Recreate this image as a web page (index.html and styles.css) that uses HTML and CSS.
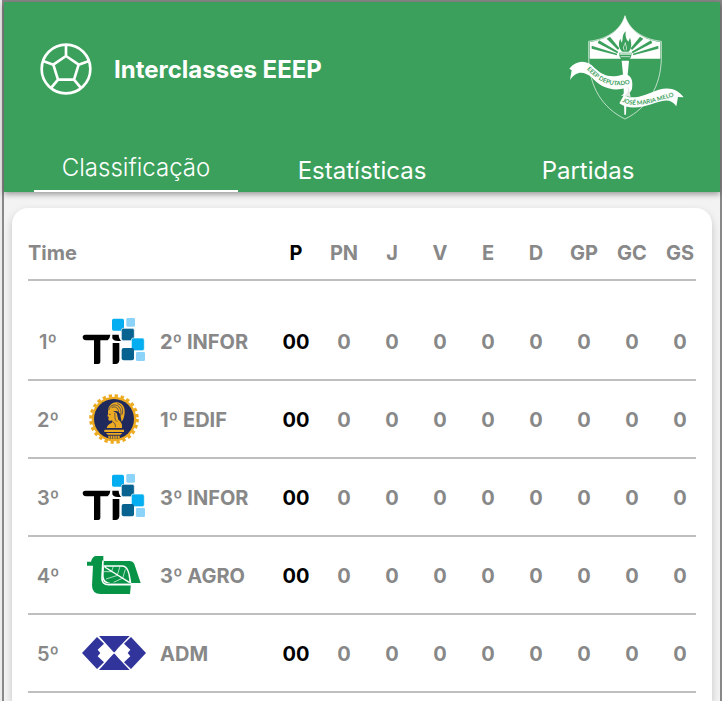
FILE: index.html
```html
<!DOCTYPE html>
<html lang="pt-BR">
<head>
<meta charset="utf-8">
<meta name="viewport" content="width=device-width, initial-scale=1">
<title>Interclasses EEEP</title>
<link rel="stylesheet" href="styles.css">
</head>
<body>
<svg class="sprite" aria-hidden="true">
  <symbol id="logo-ti" viewBox="186 45 192 156">
    <path d="M188 112q0-8 8-8h75q-1 12-8 17h-22v66q-1 5-6 5h-13v-71h-24q-9 0-10-9z" fill="#000"/>
    <path d="M277 104h19q1 14 8 18-24 3-27-7zM278 129h20v52q-1 11-11 11h-9z" fill="#000"/>
    <rect x="276" y="56" width="36" height="36" rx="5" fill="#05aef0"/>
    <rect x="319" y="54" width="26" height="26" rx="4" fill="#8bd3f8"/>
    <rect x="304" y="85" width="39" height="37" rx="6" fill="#07628f" stroke="#fff" stroke-width="2"/>
    <rect x="334" y="114" width="39" height="38" rx="6" fill="#05aef0" stroke="#fff" stroke-width="2"/>
    <rect x="305" y="144" width="37" height="37" rx="6" fill="#07628f"/>
    <rect x="348" y="156" width="27" height="27" rx="4" fill="#8bd3f8"/>
  </symbol>
  <symbol id="logo-edif" viewBox="186 39 192 156">
    <circle cx="282" cy="117" r="67" fill="#edab22"/>
    <circle cx="282" cy="117" r="70" fill="none" stroke="#edab22" stroke-width="9" stroke-dasharray="10 8.325"/>
    <circle cx="282" cy="117" r="60" fill="#20295b"/>
    <path d="M264 95c0-17 12-29 26-28 17 1 25 14 24 31-1 12-4 20-9 27l-4-20c-3-9-8-13-16-12-7 0-10 4-12 10l-9-2z" fill="#edab22"/>
    <path d="M266 91c4-14 14-19 24-15 11 5 15 17 12 31M275 83c12-7 22 3 21 17M292 71c14 3 19 19 14 33" fill="none" stroke="#20295b" stroke-width="2"/>
    <path d="M268 95l-6 13 4 3-1 8c3 5 8 3 12 2l-1 7c-9 4-15 9-16 16h46c2-12-3-19-11-25l-5-20-12-6z" fill="#edab22"/>
    <path d="M267 103h5m12-4c2 12-2 18 7 26m-14 0c8 4 10 8 9 17" fill="none" stroke="#20295b" stroke-width="2"/>
    <path d="M253 149h59v7h-59zM258 159h49l-5 5h-39zM265 167h34v8q-17 5-34 0z" fill="#edab22"/>
    <path d="M271 167v9m7-9v10m7-10v10m7-10v9" stroke="#20295b" stroke-width="2"/>
  </symbol>
  <symbol id="logo-agro" viewBox="186 27 192 156">
    <path d="M201 65h12q4-17 16-17h21v15h78q11 0 15 9l19 57h-29l-13-37q-4-12-15-12h-57v33q0 17 18 17h67l-3 32h-88q-26 0-26-26l3-59h-18z" fill="#079447"/>
    <path d="M249 62l-3 52q-1 20 20 20h68" fill="none" stroke="#fff" stroke-width="5"/>
    <path d="M252 79h53c16 0 20 20 24 50h-50c-20 0-29-9-28-25z" fill="#079447"/>
    <path d="M250 78h56c17 0 22 20 26 52M254 81l75 47" fill="none" stroke="#fff" stroke-width="4"/>
    <path d="M276 95h-24M293 106l-35 11M307 115l-26 12M275 94l5-15M292 105l8-26M308 115l8-27" fill="none" stroke="#fff" stroke-width="2"/>
  </symbol>
  <symbol id="logo-adm" viewBox="186 261 192 156">
    <path d="M237 288h92l-34 35-11 14h-3l-12-14zM237 390h92l-34-36-11-13h-3l-12 13z" fill="#31359b"/>
    <path d="M231 291l21 20-19 18 8 10-8 10 19 18-21 20-45-48zM333 291l-21 20 19 18-8 10 8 10-19 18 21 20 45-48z" fill="#31359b"/>
  </symbol>
</svg>

<div class="app">
  <header class="header">
    <div class="brand">
      <svg class="brand-ball" viewBox="120 129 156 156" fill="none" stroke="#fff" stroke-width="8" aria-hidden="true">
        <circle cx="198" cy="207" r="73"/>
        <path d="M198 168l38 26-14 45h-48l-14-45zM198 134v34M236 194l31-11M222 239l20 24M174 239l-20 24M160 194l-31-11"/>
      </svg>
      <h1 class="brand-title">Interclasses EEEP</h1>
      <svg class="crest" viewBox="54 26 348 318" role="img" aria-label="EEEP Deputado José Maria Melo">
        <path d="M225 31c-10 36-46 70-109 77v52c2 84 41 148 109 181 68-33 107-97 109-181v-52c-63-7-99-41-109-77z" fill="none" stroke="#fff" stroke-width="2"/>
        <path d="M225 31c-10 36-44 70-106 79v50h212v-50c-62-9-96-43-106-79z" fill="#fff"/>
        <path class="crest-cut" d="M125 121l76 24v5l-76-20zM147 105l58 34-3 5-59-31zM180 94l28 35-4 5-34-34zM325 121l-76 24v5l76-20zM303 105l-58 34 3 5 59-31zM270 94l-28 35 4 5 34-34z"/>
        <path class="crest-cut" d="M227 78c-13 12-6 23-12 34l-4-12c-9 17-2 31 6 39h19c9-9 10-24 4-42-2 4-3 8-5 12-8-8-9-18-8-31zM207 142h38q0 17-12 23h-15q-11-7-11-23z"/>
        <path d="M223 135c-7-11 2-14 3-23 0 9 7 13 2 23M209 145h34v2h-34zM212 154h28" fill="none" stroke="#fff" stroke-width="2"/>
        <path d="M215 166h22l-5 52-4 110h-5l-3-110z" fill="#fff"/>
        <path d="M58 190c22-27 54-27 76-2 24 22 45 31 82 20 28-4 34 16 30 43-6 15-20 22-33 20 10-6 15-14 14-24-35 13-75 1-103-32-22-17-45-20-64 9l5-29z" fill="#fff"/>
        <path d="M208 294l12-22c40 13 72-8 106-19 33-9 57-2 75 23l-17-1-5 28c-14-21-31-22-64-10-39 14-78 22-107 1z" fill="#fff"/>
        <path d="M232 246q7 14-9 26l19 3-5-25z" fill="#e6e8e6"/>
        <path id="ribbon-left" d="M110 192c35 35 71 61 138 41" fill="none"/>
        <path id="ribbon-right" d="M216 289c42 22 88 3 158-16" fill="none"/>
        <g class="crest-text">
          <text><textPath href="#ribbon-left">EEEP DEPUTADO</textPath></text>
          <text><textPath href="#ribbon-right">JOSÉ MARIA MELO</textPath></text>
        </g>
      </svg>
    </div>
    <nav class="tabs">
      <a class="tab tab-active" href="#classificacao" aria-current="page">Classificação</a>
      <a class="tab" href="#estatisticas">Estatísticas</a>
      <a class="tab" href="#partidas">Partidas</a>
    </nav>
  </header>

  <main class="card" id="classificacao">
    <table class="standings">
      <colgroup>
        <col class="col-rank"><col class="col-logo"><col>
        <col class="col-stat"><col class="col-stat"><col class="col-stat"><col class="col-stat"><col class="col-stat"><col class="col-stat"><col class="col-stat"><col class="col-stat"><col class="col-stat">
      </colgroup>
      <thead>
        <tr><th class="team-head" colspan="3" scope="col">Time</th><th class="points" scope="col">P</th><th scope="col">PN</th><th scope="col">J</th><th scope="col">V</th><th scope="col">E</th><th scope="col">D</th><th scope="col">GP</th><th scope="col">GC</th><th scope="col">GS</th></tr>
      </thead>
      <tbody>
        <tr><td class="rank">1º</td><td class="logo"><svg class="team-logo" aria-hidden="true"><use href="#logo-ti"/></svg></td><td class="name">2º INFOR</td><td class="points">00</td><td>0</td><td>0</td><td>0</td><td>0</td><td>0</td><td>0</td><td>0</td><td>0</td></tr>
        <tr><td class="rank">2º</td><td class="logo"><svg class="team-logo" aria-hidden="true"><use href="#logo-edif"/></svg></td><td class="name">1º EDIF</td><td class="points">00</td><td>0</td><td>0</td><td>0</td><td>0</td><td>0</td><td>0</td><td>0</td><td>0</td></tr>
        <tr><td class="rank">3º</td><td class="logo"><svg class="team-logo" aria-hidden="true"><use href="#logo-ti"/></svg></td><td class="name">3º INFOR</td><td class="points">00</td><td>0</td><td>0</td><td>0</td><td>0</td><td>0</td><td>0</td><td>0</td><td>0</td></tr>
        <tr><td class="rank">4º</td><td class="logo"><svg class="team-logo" aria-hidden="true"><use href="#logo-agro"/></svg></td><td class="name">3º AGRO</td><td class="points">00</td><td>0</td><td>0</td><td>0</td><td>0</td><td>0</td><td>0</td><td>0</td><td>0</td></tr>
        <tr><td class="rank">5º</td><td class="logo"><svg class="team-logo" aria-hidden="true"><use href="#logo-adm"/></svg></td><td class="name">ADM</td><td class="points">00</td><td>0</td><td>0</td><td>0</td><td>0</td><td>0</td><td>0</td><td>0</td><td>0</td></tr>
      </tbody>
    </table>
  </main>
</div>
</body>
</html>
```
FILE: styles.css
```css
* {
  box-sizing: border-box;
}

body {
  margin: 0;
  padding-left: 2px;
  background: #ececec;
  font-family: Inter, "Liberation Sans", sans-serif;
}

.sprite {
  display: none;
}

.app {
  display: flex;
  flex-direction: column;
  min-height: 100vh;
  border: 2px solid #888;
  border-bottom: 0;
  background: #f3f3f3;
}

.header {
  background: #3ba05b;
  color: #fff;
  box-shadow: 0 2px 6px rgba(0, 0, 0, 0.4);
}

.brand {
  display: flex;
  align-items: flex-end;
  gap: 22px;
  padding: 12px 36px 0;
}

.brand-ball {
  width: 52px;
  height: 52px;
  margin-bottom: 25px;
}

.brand-title {
  flex: 1;
  margin: 0 0 32px;
  font-size: 24px;
  line-height: 36px;
  font-weight: 700;
}

.crest {
  width: 116px;
  height: 106px;
}

.crest-cut {
  fill: #3ba05b;
}

.crest-text {
  fill: #3ba05b;
  font-family: Lato, sans-serif;
  font-size: 18px;
  font-weight: 700;
}

.tabs {
  display: flex;
  gap: 22px;
  padding: 24px 30px 0;
}

.tab {
  display: flex;
  flex: 1;
  align-items: center;
  justify-content: center;
  height: 48px;
  padding-top: 6px;
  color: inherit;
  font-size: 24px;
  line-height: 32px;
  font-weight: 400;
  text-decoration: none;
}

.tab-active {
  padding-top: 2px;
  border-bottom: 2px solid #fff;
  font-weight: 300;
}

.card {
  flex: 1;
  margin: 16px 8px 0;
  padding: 16px 16px 0;
  border-radius: 16px 16px 0 0;
  background: #fff;
  box-shadow: 0 4px 8px rgba(0, 0, 0, 0.2);
}

.standings {
  width: 100%;
  border-spacing: 0;
  table-layout: fixed;
  color: #888;
  font-size: 20px;
  line-height: 24px;
  font-weight: 700;
  text-align: center;
}

.standings th,
.standings td {
  padding: 2px 0 0 16px;
  border-bottom: 2px solid #bfbfbf;
}

.standings th {
  height: 57px;
}

.standings td {
  height: 78px;
}

.standings tbody::before {
  content: "";
  display: table-row;
  height: 22px;
}

.col-rank {
  width: 40px;
}

.col-logo {
  width: 92px;
}

.col-stat {
  width: 48px;
}

.standings .team-head,
.standings .name {
  padding-left: 0;
  text-align: left;
}

.standings .rank {
  padding-left: 0;
  font-weight: 600;
}

.standings .logo {
  padding: 0;
}

.standings .points {
  color: #000;
}

.team-logo {
  display: block;
  width: 64px;
  height: 52px;
  margin: 0 auto;
}
```
